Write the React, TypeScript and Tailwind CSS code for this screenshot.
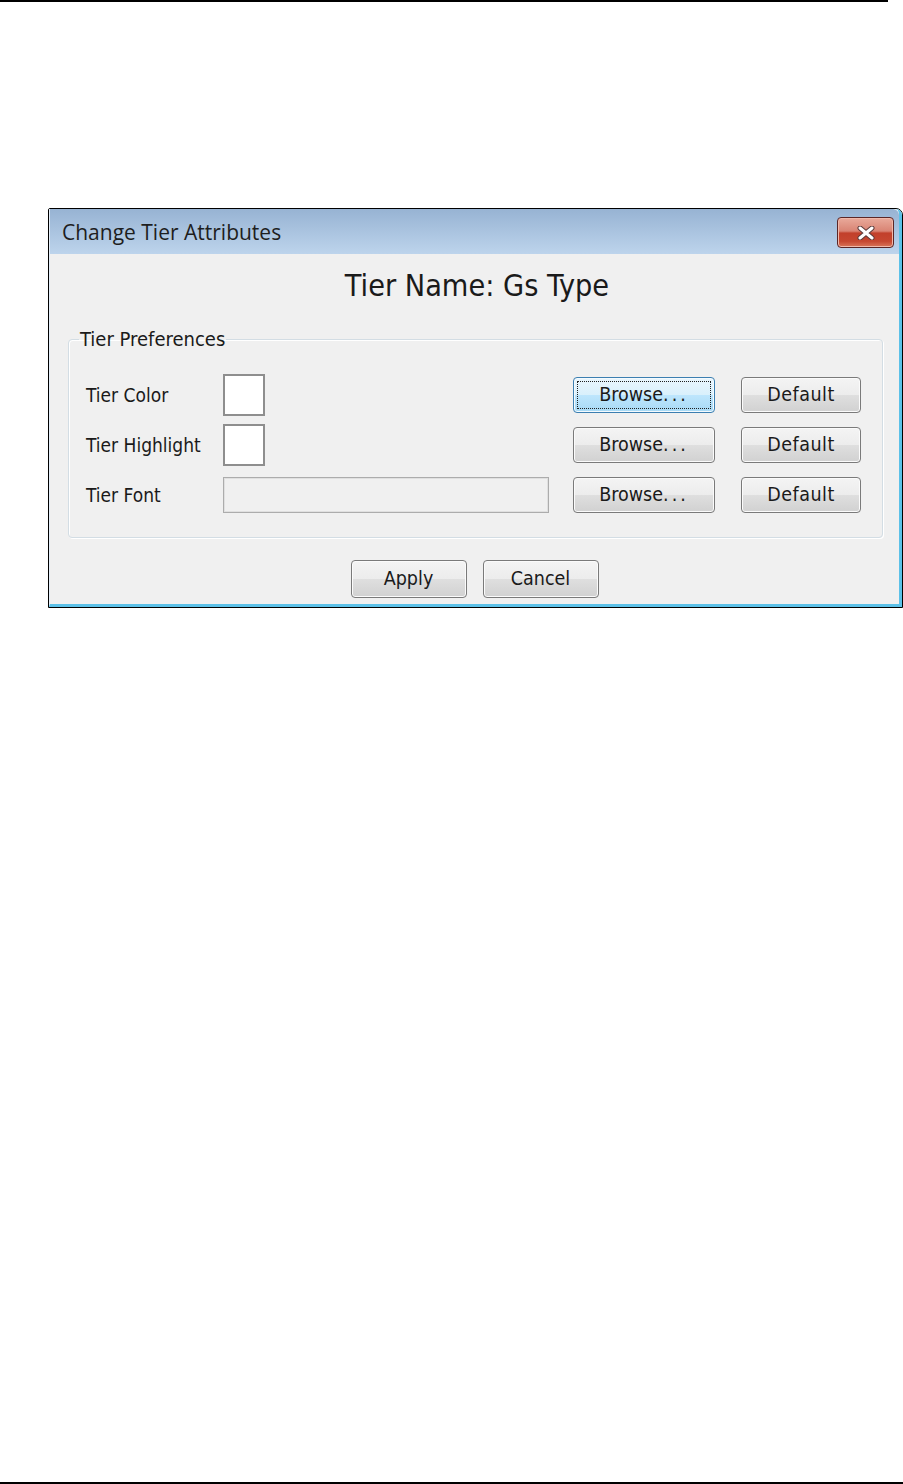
import type { ReactNode } from 'react';

const uiFont = "font-['DejaVu_Sans_Condensed','Liberation_Sans',sans-serif]";

function WinButton({ children, className, focused }: { children: ReactNode; className: string; focused?: boolean }) {
  return (
    <button
      type="button"
      className={
        focused
          ? `relative flex items-center justify-center rounded-[4px] border border-[#3c7fb1] bg-[linear-gradient(to_bottom,#eaf6fd_0%,#d9f0fc_50%,#bee6fd_50%,#a7d9f5_100%)] text-[19.5px] text-[#1a1a1a] shadow-[inset_0_0_0_1px_#f4fbff] ${className}`
          : `relative flex items-center justify-center rounded-[4px] border border-[#7a7a7a] bg-[linear-gradient(to_bottom,#f4f4f4_0%,#ececec_50%,#dfdfdf_50%,#d1d1d1_100%)] text-[19.5px] text-[#1a1a1a] shadow-[inset_0_0_0_1px_#fbfbfb] ${className}`
      }
    >
      {focused && <span className="absolute inset-[3px] border border-dotted border-[#202020]" />}
      <span className="relative leading-none">{children}</span>
    </button>
  );
}

function Row({ label, middle }: { label: string; middle: ReactNode }) {
  return (
    <div className="flex h-[50px] items-center">
      <span className="w-[137px] text-[19px] text-[#1a1a1a]">{label}</span>
      <div className="flex w-[326px] items-center">{middle}</div>
      <WinButton className="ml-[24px] h-[36px] w-[142px]" focused={label === 'Tier Color'}>
        Browse<span className="tracking-[3px]">...</span>
      </WinButton>
      <WinButton className="ml-[26px] h-[36px] w-[120px]">
        <span className="tracking-[0.5px]">Default</span>
      </WinButton>
    </div>
  );
}

export default function App() {
  return (
    <div className={`flex h-[1484px] w-[903px] flex-col bg-white ${uiFont}`}>
      <div className="h-[2px] w-[888px] bg-black" />

      <div className="ml-[48px] mt-[206px] w-[855px] rounded-tr-[7px] rounded-tl-[2px] border border-black">
        <div className="rounded-tr-[6px] border-b-[3px] border-l border-r-[3px] border-b-[#5cc1e8] border-l-[#e4eef8] border-r-[#5cc1e8]">
          {/* title bar */}
          <div className="flex h-[45px] rounded-tr-[6px] bg-[linear-gradient(to_bottom,#97b3d3,#bdd4ec)]">
            <span className="pl-[12px] pt-[11px] font-['Open_Sans',sans-serif] text-[21px] leading-[25px] text-[#1e1e1e]">
              Change Tier Attributes
            </span>
            <button
              type="button"
              className="ml-auto mr-[5px] mt-[8px] flex h-[31px] w-[57px] items-center justify-center rounded-[4px] border border-[#5b2626] bg-[linear-gradient(to_bottom,#e9aa9b_0%,#d98474_45%,#c2402b_52%,#c64730_80%,#d9765a_100%)] shadow-[inset_0_0_0_1px_#f0b8aa]"
            >
              <svg width="20" height="14" viewBox="0 0 20 14">
                <path d="M4 2 L16 12 M16 2 L4 12" stroke="#5a3a3a" strokeWidth="5" strokeLinecap="round" />
                <path d="M4 2 L16 12 M16 2 L4 12" stroke="#ffffff" strokeWidth="3" strokeLinecap="round" />
              </svg>
            </button>
          </div>

          {/* content */}
          <div className="flex h-[350px] flex-col bg-[#f0f0f0]">
            <div className="flex h-[64px] items-center justify-center pl-[5px] text-[30.3px] text-[#1a1a1a]">
              Tier Name: Gs Type
            </div>

            <fieldset className="ml-[18px] mr-[16px] mt-[9px] rounded-[4px] border border-[#d3dde4] shadow-[inset_1px_1px_0_#ffffff,1px_1px_0_#ffffff]">
              <legend className="ml-[10px] px-[1px] text-[20px] leading-[24px] text-[#1a1a1a]">Tier Preferences</legend>
              <div className="pb-[17px] pl-[17px] pt-[19px]">
                <Row label="Tier Color" middle={<div className="h-[42px] w-[42px] border-2 border-[#8e8e8e] bg-white" />} />
                <Row label="Tier Highlight" middle={<div className="h-[42px] w-[42px] border-2 border-[#8e8e8e] bg-white" />} />
                <Row
                  label="Tier Font"
                  middle={<div className="h-[36px] w-[326px] border border-[#acacac] bg-[#f0f0f0] shadow-[inset_0_0_0_1px_#e0e0e0]" />}
                />
              </div>
            </fieldset>

            <div className="mt-[22px] flex justify-center gap-[16px]">
              <WinButton className="h-[38px] w-[116px]">Apply</WinButton>
              <WinButton className="h-[38px] w-[116px]">Cancel</WinButton>
            </div>
          </div>
        </div>
      </div>

      <div className="mt-auto h-[2px] w-full bg-black" />
    </div>
  );
}
